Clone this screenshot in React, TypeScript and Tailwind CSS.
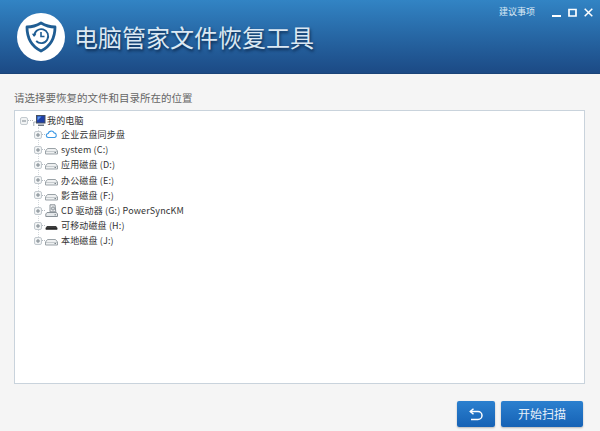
const font = { fontFamily: '"Noto Sans CJK SC", "Liberation Sans", sans-serif' };

function Expander({ minus }: { minus?: boolean }) {
  return (
    <svg width="8" height="8" viewBox="0 0 8 8" className="shrink-0 relative">
      <rect x="0.5" y="0.5" width="7" height="7" rx="1.5" fill="#f1f3f4" stroke="#c3cacf" />
      <path d="M2 4h4" stroke="#7d868d" />
      {!minus && <path d="M4 2v4" stroke="#7d868d" />}
    </svg>
  );
}

function Drive({ dark }: { dark?: boolean }) {
  if (dark) {
    return (
      <svg width="13" height="11" viewBox="0 0 13 11" className="shrink-0">
        <path d="M2 6h9l1.5 2v1.5H.5V8z" fill="#3c3c3c" />
        <path d="M1 9h11" stroke="#161616" />
      </svg>
    );
  }
  return (
    <svg width="13" height="11" viewBox="0 0 13 11" className="shrink-0">
      <path d="M2.5 4.5h8l2 2.5v3H.5V7z" fill="#eef0f1" stroke="#9aa2a7" />
      <path d="M1 7.5h11" stroke="#c6cbce" />
      <rect x="9.5" y="8" width="1.5" height="1" fill="#7c868c" />
    </svg>
  );
}

function Cloud() {
  return (
    <svg width="13" height="11" viewBox="0 0 13 11" className="shrink-0">
      <path d="M3.5 8.5a2 2 0 0 1-.3-4 3.2 3.2 0 0 1 6-.6 2.4 2.4 0 0 1 .6 4.6z" fill="#fff" stroke="#3b98e4" strokeWidth="1.1" />
    </svg>
  );
}

function Disc() {
  return (
    <svg width="13" height="13" viewBox="0 0 13 13" className="shrink-0">
      <path d="M5 .8h5l.8 7H5z" fill="#f0f1f2" stroke="#8a9298" />
      <circle cx="8" cy="4.5" r="1.6" fill="#d6dade" stroke="#8a9298" />
      <path d="M2 8.5h9.5l1 1.5v2.5H.8V10z" fill="#e5e8ea" stroke="#8a9298" />
      <rect x="9.5" y="10.3" width="1.5" height="1" fill="#7c868c" />
    </svg>
  );
}

function Computer() {
  return (
    <svg width="13" height="12" viewBox="0 0 13 12" className="shrink-0">
      <path d="M.8 11V7h2.4" stroke="#a6adb3" fill="none" />
      <rect x="3.5" y="0.5" width="8.5" height="7.5" fill="#1f3fa8" stroke="#46505e" />
      <path d="M4.5 1.5h4l-4 4z" fill="#5f9bf0" />
      <path d="M5 9.5h6v1.5H5z" fill="#6d7682" />
    </svg>
  );
}

const rows: { label: string; icon: React.ReactNode }[] = [
  { label: "企业云盘同步盘", icon: <Cloud /> },
  { label: "system (C:)", icon: <Drive /> },
  { label: "应用磁盘 (D:)", icon: <Drive /> },
  { label: "办公磁盘 (E:)", icon: <Drive /> },
  { label: "影音磁盘 (F:)", icon: <Drive /> },
  { label: "CD 驱动器 (G:) PowerSyncKM", icon: <Disc /> },
  { label: "可移动磁盘 (H:)", icon: <Drive dark /> },
  { label: "本地磁盘 (J:)", icon: <Drive /> },
];

export default function App() {
  return (
    <div className="w-[600px] h-[431px] flex flex-col bg-[#f5f5f5] overflow-hidden" style={font}>
      <header className="h-[74px] shrink-0 flex bg-gradient-to-b from-[#3284c4] to-[#1c4a85] border-b border-[#1a4478]">
        <div className="flex items-center pl-[17px] flex-1">
          <div className="w-[48px] h-[48px] rounded-full bg-white flex items-center justify-center shrink-0">
            <svg width="34" height="34" viewBox="0 0 34 34" fill="none">
              <path d="M17 3c5 3 9 4 14 4 0 10-4 19-14 24C7 26 3 17 3 7c5 0 9-1 14-4z" stroke="#1f5d93" strokeWidth="2.8" strokeLinejoin="round" />
              <path d="M10.2 16a7 7 0 1 1 2 5" stroke="#1f5d93" strokeWidth="1.8" />
              <path d="M7.8 13.8h4.6l-2.3 3.2z" fill="#1f5d93" />
              <path d="M17 12v4.5h3.5" stroke="#1f5d93" strokeWidth="1.6" />
            </svg>
          </div>
          <h1 className="ml-[9px] text-[24px] leading-none text-[#dbe8f3] [text-shadow:1px_2px_3px_rgba(5,25,55,0.8)]">
            电脑管家文件恢复工具
          </h1>
        </div>
        <div className="flex items-start pt-[6px] pr-[7px] gap-[17px]">
          <span className="text-[9px] leading-[12px] text-[#dcebf6]">建议事项</span>
          <div className="flex items-center gap-[7px] h-[12px] text-white">
            <svg width="9" height="9" viewBox="0 0 9 9"><path d="M0 8h9" stroke="#fff" strokeWidth="2" /></svg>
            <svg width="9" height="9" viewBox="0 0 9 9" fill="none"><path d="M1 1.5h7v6.5H1z" stroke="#fff" strokeWidth="1.7" /></svg>
            <svg width="9" height="9" viewBox="0 0 9 9" fill="none"><path d="M.7.7l7.6 7.6M8.3.7L.7 8.3" stroke="#fff" strokeWidth="1.5" /></svg>
          </div>
        </div>
      </header>

      <main className="flex-1 flex flex-col px-[14px] min-h-0">
        <p className="mt-[17px] text-[10.5px] leading-[14px] text-[#666666]">请选择要恢复的文件和目录所在的位置</p>
        <section className="mt-[5px] w-[571px] h-[274px] bg-white border border-[#c9d3dc] pt-[3px] text-[9px] tracking-[0.15px] text-[#333333]">
          <div className="h-[13px] flex items-center pl-[5px]">
            <Expander minus />
            <span className="w-[5px] border-t border-dotted border-[#b4bac0]" />
            <Computer />
            <span className="ml-[1px] leading-none">我的电脑</span>
          </div>
          <ul className="relative pl-[19px]">
            <span className="absolute left-[23px] top-0 bottom-[8px] border-l border-dotted border-[#d3d8dc]" />
            {rows.map((r) => (
              <li key={r.label} className="h-[15.2px] flex items-center">
                <Expander />
                <span className="w-[3px] border-t border-dotted border-[#b4bac0]" />
                <span className="w-[13px] flex justify-center">{r.icon}</span>
                <span className="ml-[3px] leading-none whitespace-nowrap">{r.label}</span>
              </li>
            ))}
          </ul>
        </section>
        <div className="mt-[17px] flex justify-end gap-[6px] pr-[3px]">
          <button className="w-[38px] h-[26px] rounded-[2px] bg-gradient-to-b from-[#2b80cf] to-[#1662b5] flex items-center justify-center shadow-[0_1px_2px_rgba(0,0,0,0.25)]">
            <svg width="16" height="13" viewBox="0 0 16 13" fill="none">
              <path d="M2.5 3.5H10a4 4 0 0 1 0 8H3" stroke="#fff" strokeWidth="1.5" />
              <path d="M5.5.8L2.3 3.5l3.2 2.7" stroke="#fff" strokeWidth="1.5" />
            </svg>
          </button>
          <button className="w-[82px] h-[26px] rounded-[2px] bg-gradient-to-b from-[#2b80cf] to-[#1662b5] text-[12px] text-[#e6f0fa] shadow-[0_1px_2px_rgba(0,0,0,0.25)]">
            开始扫描
          </button>
        </div>
      </main>
    </div>
  );
}
